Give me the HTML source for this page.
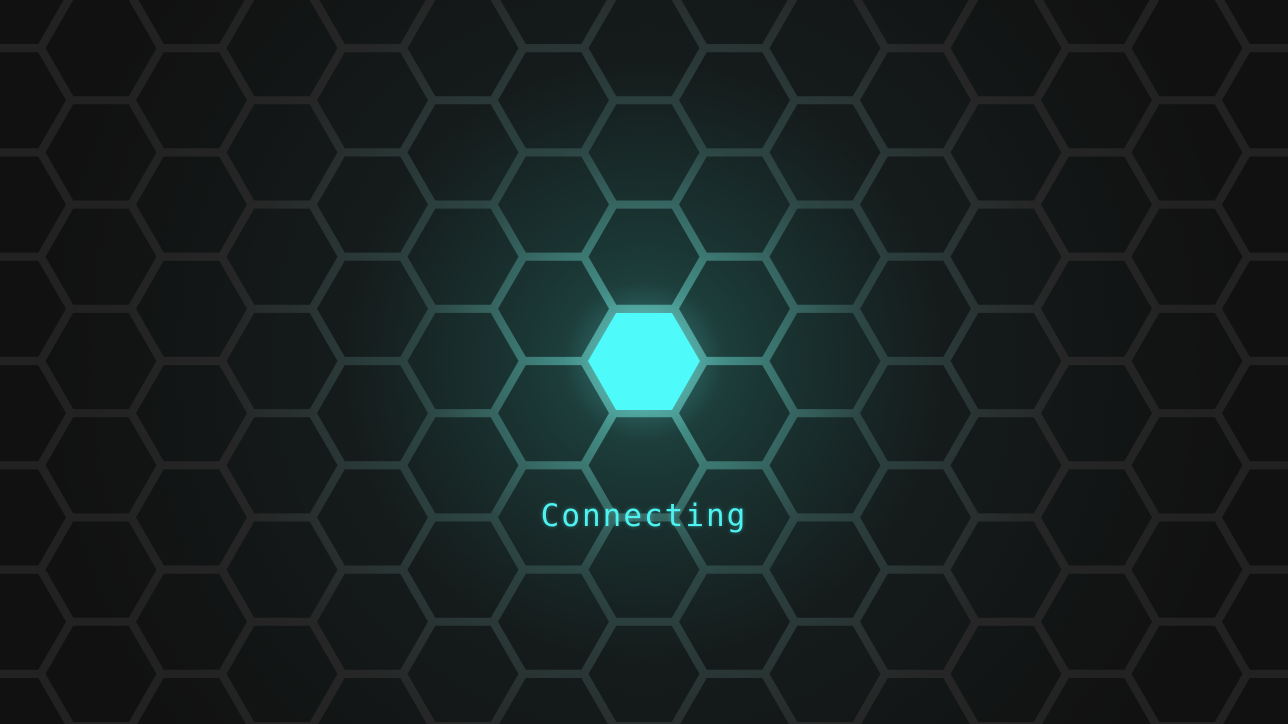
<!DOCTYPE html>
<html><head><meta charset="utf-8"><style>
html,body{margin:0;padding:0;background:#111;overflow:hidden;width:1288px;height:724px}
#s{position:absolute;left:0;top:0}
.t{position:absolute;left:0;width:1288px;top:498px;text-align:center;font-family:"DejaVu Sans Mono","Liberation Mono",monospace;font-size:31px;letter-spacing:2px;color:#4ef2f0;text-shadow:0 0 4px rgba(78,242,240,.4)}
</style></head><body>
<svg id="s" width="1288" height="724" xmlns="http://www.w3.org/2000/svg">
<defs>
<radialGradient id="lg" gradientUnits="userSpaceOnUse" cx="644" cy="361" r="560">
<stop offset="0" stop-color="#62bab2"/><stop offset="0.15" stop-color="#428a83"/><stop offset="0.4" stop-color="#2c4543"/><stop offset="0.75" stop-color="#262626"/><stop offset="1" stop-color="#222"/></radialGradient>
<radialGradient id="fg" gradientUnits="userSpaceOnUse" cx="644" cy="361" r="600">
<stop offset="0" stop-color="#234e4b"/><stop offset="0.2" stop-color="#1a3634"/><stop offset="0.5" stop-color="#151b1b"/><stop offset="1" stop-color="#111"/></radialGradient>
<radialGradient id="gl" gradientUnits="userSpaceOnUse" cx="644" cy="361" r="80">
<stop offset="0" stop-color="#6ff" stop-opacity=".3"/><stop offset="1" stop-color="#6ff" stop-opacity="0"/></radialGradient>
</defs>
<rect width="1288" height="724" fill="url(#lg)"/>
<g id="h"></g>
<circle cx="644" cy="361" r="80" fill="url(#gl)"/>
<polygon points="700,361 672,410 616,410 588,361 616,313 672,313" fill="#4ffafa"/>
</svg>
<div class="t">Connecting</div>
<script>
var g=document.getElementById('h'),s='',dx=90.5,dy=104.3,r=55.5;
for(var c=-8;c<=8;c++){var x=644+c*dx,off=(Math.abs(c)%2)?dy/2:0;
for(var k=-5;k<=5;k++){var y=361+off+k*dy;if(c==0&&k==0)continue;
var p=[];for(var i=0;i<6;i++){var a=Math.PI/3*i;p.push((x+r*Math.cos(a)).toFixed(1)+','+(y+r*Math.sin(a)).toFixed(1));}
s+='<polygon points="'+p.join(' ')+'" fill="url(#fg)"/>';}}
g.innerHTML=s;
</script>
</body></html>
